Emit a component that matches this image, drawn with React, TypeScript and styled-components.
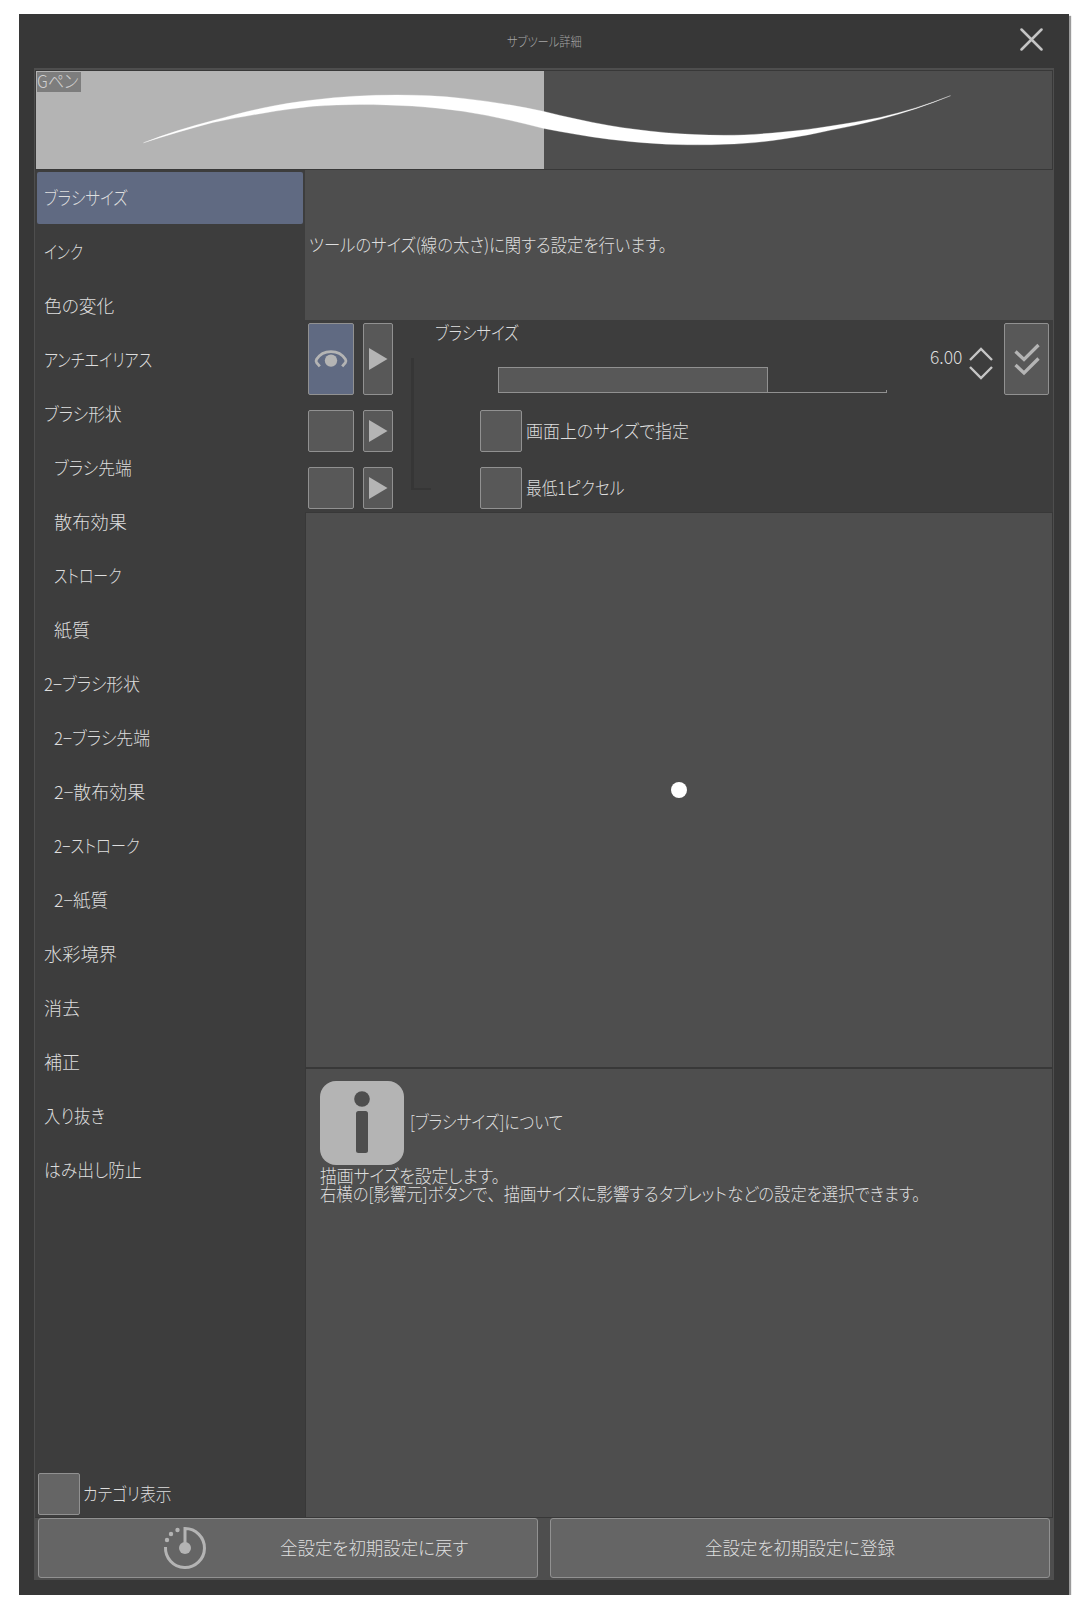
import React, { useLayoutEffect, useRef, useState } from "react";
import styled, { createGlobalStyle } from "styled-components";

const c = {
  window: "#373737",
  panel: "#4e4e4e",
  dark: "#3d3d3d",
  line: "#383838",
  control: "#585858",
  button: "#656565",
  edge: "#919191",
  active: "#606a82",
  text: "#dedede",
  icon: "#b4b4b4",
};

const GlobalStyle = createGlobalStyle`
  * { box-sizing: border-box; }
  body {
    margin: 0;
    background: #fff;
    color: ${c.text};
    font-family: "Noto Sans CJK JP", sans-serif;
    font-size: 18px;
    font-weight: 300;
    line-height: 18px;
    overflow: hidden;
  }
`;

const Window = styled.main`
  width: 1050px;
  height: 1581px;
  margin: 14px 0 0 19px;
  padding: 0 15px 15px;
  display: flex;
  flex-direction: column;
  background: ${c.window};
  box-shadow: 2px 2px 1px #9a9a9a;
`;

const TitleBar = styled.header`
  height: 54px;
  flex: none;
  display: grid;
  grid-template-columns: 23px 1fr 23px;
  align-items: center;
  padding: 0 11px;
`;

const Title = styled.h1`
  grid-column: 2;
  justify-self: center;
  margin: 2px 0 0;
  font-size: 13px;
  font-weight: 300;
  color: #a6a6a6;
`;

const CloseButton = styled.button`
  padding: 0;
  margin-top: -3px;
  width: 23px;
  height: 23px;
  border: 0;
  background: none;
`;

const Panel = styled.div`
  flex: 1;
  display: flex;
  flex-direction: column;
  background: ${c.panel};
  padding: 2px 1px 2px;
`;

const StrokePreview = styled.section`
  height: 100px;
  flex: none;
  border: 1px solid ${c.line};
  background: linear-gradient(90deg, #b4b4b4 508px, ${c.panel} 508px);
  display: grid;
  > * { grid-area: 1 / 1; }
`;

const ToolName = styled.span`
  width: 44px;
  height: 20px;
  margin: 1px;
  background: #7d7d7d;
  color: #d0d0d0;
  line-height: 18px;
`;

const Body = styled.div`
  height: 1348px;
  flex: none;
  display: grid;
  grid-template-columns: 270px 1fr;
  border-bottom: 1px solid ${c.line};
`;

const Sidebar = styled.nav`
  display: flex;
  flex-direction: column;
  background: ${c.dark};
  padding: 2px 2px 2px;
`;

const Category = styled.div<{ $selected?: boolean; $child?: boolean }>`
  height: 52px;
  margin-bottom: 2px;
  display: flex;
  align-items: center;
  border-radius: 2px;
  padding-left: ${(p) => (p.$child ? 17 : 7)}px;
  background: ${(p) => (p.$selected ? c.active : "transparent")};
`;

const CategoryToggle = styled.label`
  margin-top: auto;
  display: flex;
  align-items: center;
  gap: 3px;
  padding-left: 1px;
`;

const Content = styled.section`
  display: flex;
  flex-direction: column;
  min-width: 0;
`;

const Description = styled.p`
  height: 150px;
  flex: none;
  margin: 0;
  padding-left: 4px;
  display: flex;
  align-items: center;
`;

const Settings = styled.div`
  height: 193px;
  flex: none;
  display: flex;
  flex-direction: column;
  gap: 15px;
  padding: 3px 4px 0 3px;
  background: ${c.dark};
  border-bottom: 1px solid ${c.line};
`;

const Setting = styled.div<{ $tall?: boolean }>`
  height: ${(p) => (p.$tall ? 72 : 42)}px;
  display: grid;
  grid-template-rows: 100%;
  grid-template-columns: 46px 30px 1fr;
  column-gap: 9px;
`;

const Box = styled.button<{ $width?: number; $fill?: string }>`
  width: ${(p) => p.$width ?? 42}px;
  height: 100%;
  min-height: 42px;
  flex: none;
  padding: 0;
  display: grid;
  place-items: center;
  background: ${(p) => p.$fill ?? c.control};
  border: 1px solid ${c.edge};
  border-radius: 2px;
`;

const SizeEditor = styled.div`
  display: grid;
  grid-template-rows: 100%;
  grid-template-columns: 20px 63px 389px 94px 26px 1fr;
`;

const Bracket = styled.div`
  grid-column: 1;
  width: 20px;
  height: 132px;
  margin: 35px 0 0 9px;
  border: solid #363636;
  border-width: 0 0 2px 3px;
`;

const SizeLabel = styled.div`
  grid-column: 2 / 4;
  grid-row: 1;
  padding: 1px 0 0 13px;
  z-index: 1;
`;

const Track = styled.div`
  grid-column: 3;
  grid-row: 1;
  align-self: start;
  margin: 44px 0 0 13px;
  width: 389px;
  height: 26px;
  display: flex;
  align-items: flex-end;
  justify-content: space-between;
  border-bottom: 1px solid ${c.edge};

  &::after {
    content: "";
    width: 1px;
    height: 2px;
    background: ${c.edge};
  }
`;

const Level = styled.div`
  width: 270px;
  height: 25px;
  background: ${c.control};
  border: 1px solid ${c.edge};
  border-bottom: 0;
`;

const Value = styled.div`
  grid-column: 4;
  grid-row: 1;
  margin: 25px 6px 0 0;
  justify-self: end;
`;

const Steppers = styled.div`
  grid-column: 5;
  grid-row: 1;
  padding-top: 22px;
`;

const Origin = styled.div`
  grid-column: 6;
  grid-row: 1;
  justify-self: end;
`;

const Check = styled.label`
  display: flex;
  align-items: center;
  gap: 4px;
  padding-left: 78px;
`;

const TipPreview = styled.div`
  height: 556px;
  flex: none;
  display: grid;
  place-items: center;
  border: 1px solid ${c.line};
  border-top: 0;
  border-bottom-width: 2px;
`;

const Dot = styled.div`
  width: 16px;
  height: 16px;
  border-radius: 50%;
  background: #fff;
`;

const Info = styled.section`
  flex: 1;
  padding: 12px 14px;
  border: 1px solid ${c.line};
  border-width: 0 1px;
`;

const InfoHead = styled.div`
  display: flex;
  align-items: center;
  gap: 6px;
  margin-bottom: 2px;
`;

const InfoTitle = styled.h2`
  margin: 0 0 3px;
  font-size: inherit;
  font-weight: inherit;
`;

const InfoLine = styled.p`
  margin: 0;
  height: 18px;
`;

const Footer = styled.footer`
  display: grid;
  grid-template-columns: 1fr 1fr;
  gap: 12px;
  height: 60px;
  padding: 0 3px;
`;

const Action = styled.button`
  display: flex;
  align-items: center;
  justify-content: center;
  padding: 0;
  font: inherit;
  color: inherit;
  background: ${c.button};
  border: 1px solid ${c.edge};
  border-radius: 3px;
`;

const ResetAction = styled(Action)`
  justify-content: flex-start;
  padding-left: 124px;
  gap: 73px;
`;

const FitBox = styled.span`
  display: inline-block;
  white-space: nowrap;
  line-height: inherit;
`;

const FitInk = styled.span`
  display: inline-block;
  transform-origin: left center;
  font-feature-settings: "palt";
`;

const FullWidth = styled.span`
  font-feature-settings: normal;
`;

function Fit({ w, children }: { w: number; children: React.ReactNode }) {
  const ref = useRef<HTMLSpanElement>(null);
  const [scale, setScale] = useState(1);
  useLayoutEffect(() => {
    if (ref.current) setScale(w / ref.current.offsetWidth);
  }, [w]);
  return (
    <FitBox style={{ width: w }}>
      <FitInk ref={ref} style={{ transform: `translateY(-1px) scaleX(${scale})` }}>
        {children}
      </FitInk>
    </FitBox>
  );
}

const PlayIcon = () => (
  <svg width="20" height="24" viewBox="0 0 20 24">
    <path d="M1 1v22l18.5-11z" fill={c.icon} />
  </svg>
);

const EyeIcon = () => (
  <svg width="36" height="22" viewBox="0 0 36 22" fill="none">
    <path d="M6.800 18.300L3.600 14.600Q2.600 13 3.600 11.300C7 5.800 12 3.600 18 3.600S29 5.800 32.400 11.300Q33.400 13 32.400 14.600L29.200 18.300" stroke={c.icon} strokeWidth="2.800" />
    <circle cx="18" cy="12.600" r="6.200" fill={c.icon} />
  </svg>
);

const CloseIcon = () => (
  <svg width="23" height="23" viewBox="0 0 23 23">
    <path d="M1.500 1.500l20 20m0-20l-20 20" stroke="#c4c4c4" strokeWidth="2.500" strokeLinecap="round" />
  </svg>
);

const StepIcon = () => (
  <svg width="26" height="38" viewBox="0 0 26 38" fill="none" stroke="#c6c6c6" strokeWidth="2.400">
    <path d="M2 15L13 4l11 11M2 22l11 11 11-11" />
  </svg>
);

const OriginIcon = () => (
  <svg width="28" height="34" viewBox="0 0 28 34" fill="none" stroke={c.icon} strokeWidth="3.300">
    <path d="M2.500 9.500l8.500 8L25.500 3M2.500 23l8.500 8 14.500-14.500" />
  </svg>
);

const InfoIcon = () => (
  <svg width="84" height="84" viewBox="0 0 84 84">
    <rect width="84" height="84" rx="16" fill="#b4b4b4" />
    <circle cx="42" cy="18" r="7.800" fill={c.panel} />
    <rect x="36" y="30" width="12" height="42" rx="2.500" fill={c.panel} />
  </svg>
);

const ResetIcon = () => (
  <svg width="44" height="44" viewBox="0 0 44 44" fill="none">
    <path d="M22 22V2.500A19.500 19.500 0 1 1 2.500 21" stroke={c.icon} strokeWidth="3" />
    <circle cx="22" cy="22" r="6" fill={c.icon} />
    <circle cx="4" cy="14" r="2.200" fill={c.icon} />
    <circle cx="8" cy="8" r="2.200" fill={c.icon} />
    <circle cx="14.500" cy="4" r="2.200" fill={c.icon} />
  </svg>
);

const BrushStroke = () => (
  <svg width="1016" height="98" viewBox="36 71 1016 98">
    <path
      fill="#fff"
      stroke="#fff"
      strokeWidth="0.3"
      d="M143.500 142.800C166 134 190 126.500 213 120.600C230 116 246 111.500 263 108C280 104.300 296 102 313 100C340 96.500 368 95 397 95C420 95 441 96 463 98.400C492 101.500 518 106 544 111.500C566 117 587 121.500 609 125.500C645 131.500 685 135.300 724 135.300C744 135.300 764 134 783 132C800 130.500 816 128.500 831 126C848 123.500 864 120.500 880 117.500C904 112 928 104.500 950.500 95.700C928 105 904 113 880 119.300C864 123.300 848 127 831 130C816 133.500 800 136.500 783 139C764 142 744 144 724 144.300C690 145.800 650 144.300 609 139.200C587 136.500 565 132.500 544 128.500C517 121.500 490 115.500 463 111.300C430 106.500 395 104.500 360 104.500C345 104.500 329 105.300 313 106.300C296 108 280 110.300 263 113.200C246 116 230 119 213 122.400C190 128.500 166 135.500 143.500 142.800Z"
    />
  </svg>
);

const categories: { name: string; w: number; child?: boolean }[] = [
  { name: "ブラシサイズ", w: 84 },
  { name: "インク", w: 39 },
  { name: "色の変化", w: 70 },
  { name: "アンチエイリアス", w: 108 },
  { name: "ブラシ形状", w: 78 },
  { name: "ブラシ先端", w: 78, child: true },
  { name: "散布効果", w: 73, child: true },
  { name: "ストローク", w: 68, child: true },
  { name: "紙質", w: 36, child: true },
  { name: "2−ブラシ形状", w: 96 },
  { name: "2−ブラシ先端", w: 96, child: true },
  { name: "2−散布効果", w: 91, child: true },
  { name: "2−ストローク", w: 86, child: true },
  { name: "2−紙質", w: 54, child: true },
  { name: "水彩境界", w: 73 },
  { name: "消去", w: 36 },
  { name: "補正", w: 36 },
  { name: "入り抜き", w: 61 },
  { name: "はみ出し防止", w: 98 },
];

export default function App() {
  return (
    <>
      <GlobalStyle />
      <Window>
        <TitleBar>
          <Title><Fit w={75}>サブツール詳細</Fit></Title>
          <CloseButton aria-label="閉じる"><CloseIcon /></CloseButton>
        </TitleBar>
        <Panel>
          <StrokePreview>
            <BrushStroke />
            <ToolName><Fit w={41}>Gペン</Fit></ToolName>
          </StrokePreview>
          <Body>
            <Sidebar>
              {categories.map((item, i) => (
                <Category key={item.name} $selected={i === 0} $child={item.child}>
                  <Fit w={item.w}>{item.name}</Fit>
                </Category>
              ))}
              <CategoryToggle>
                <Box $fill={c.button} />
                <Fit w={89}>カテゴリ表示</Fit>
              </CategoryToggle>
            </Sidebar>
            <Content>
              <Description>
                <Fit w={358}>ツールのサイズ(線の太さ)に関する設定を行います。</Fit>
              </Description>
              <Settings>
                <Setting $tall>
                  <Box $width={46} $fill={c.active}><EyeIcon /></Box>
                  <Box $width={30}><PlayIcon /></Box>
                  <SizeEditor>
                    <Bracket />
                    <SizeLabel><Fit w={84}>ブラシサイズ</Fit></SizeLabel>
                    <Track><Level /></Track>
                    <Value><Fit w={32}>6.00</Fit></Value>
                    <Steppers><StepIcon /></Steppers>
                    <Origin><Box $width={45}><OriginIcon /></Box></Origin>
                  </SizeEditor>
                </Setting>
                <Setting>
                  <Box $width={46} />
                  <Box $width={30}><PlayIcon /></Box>
                  <Check><Box /><Fit w={163}>画面上のサイズで指定</Fit></Check>
                </Setting>
                <Setting>
                  <Box $width={46} />
                  <Box $width={30}><PlayIcon /></Box>
                  <Check><Box /><Fit w={99}>最低1ピクセル</Fit></Check>
                </Setting>
              </Settings>
              <TipPreview><Dot /></TipPreview>
              <Info>
                <InfoHead>
                  <InfoIcon />
                  <InfoTitle><Fit w={153}>[ブラシサイズ]について</Fit></InfoTitle>
                </InfoHead>
                <InfoLine><Fit w={180}>描画サイズを設定します。</Fit></InfoLine>
                <InfoLine>
                  <Fit w={600}>
                    右横の[影響元]ボタンで<FullWidth>、</FullWidth>描画サイズに影響するタブレットなどの設定を選択できます。
                  </Fit>
                </InfoLine>
              </Info>
            </Content>
          </Body>
          <Footer>
            <ResetAction><ResetIcon /><Fit w={188}>全設定を初期設定に戻す</Fit></ResetAction>
            <Action><Fit w={190}>全設定を初期設定に登録</Fit></Action>
          </Footer>
        </Panel>
      </Window>
    </>
  );
}
